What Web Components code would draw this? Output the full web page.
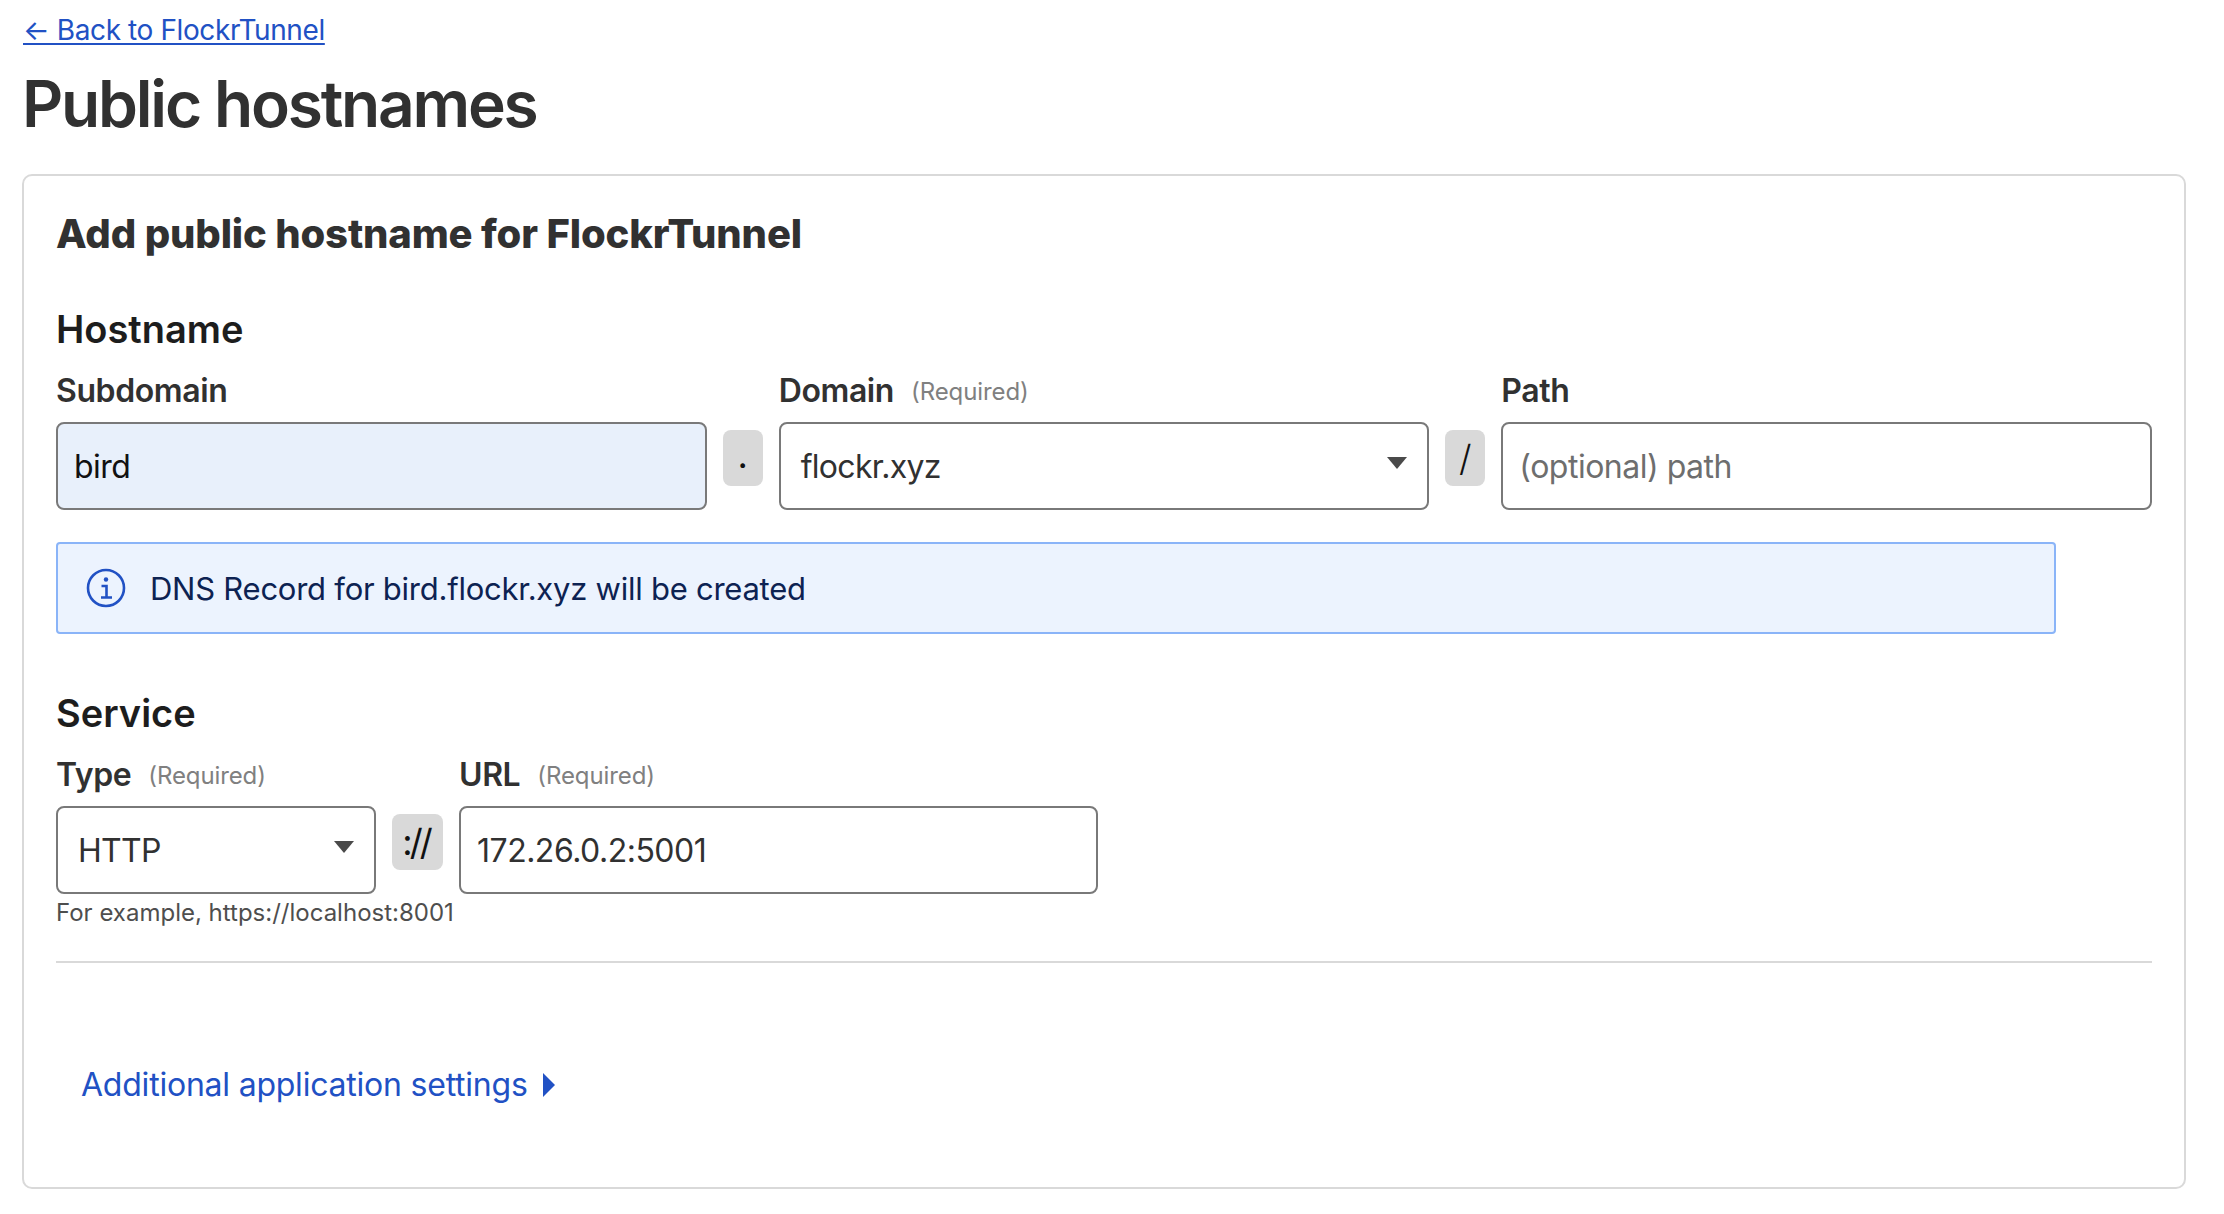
<!DOCTYPE html>
<html>
<head>
<meta charset="utf-8">
<title>Public hostnames</title>
<style>
  html, body { margin: 0; background: #fff; }
  body { font-family: Inter, "Liberation Sans", sans-serif; color: #313131; }
</style>
</head>
<body>
<fl-page>
  <a slot="back" href="#">← Back to FlockrTunnel</a>
  <span slot="title">Public hostnames</span>
  <fl-card heading="Add public hostname for FlockrTunnel">
    <fl-section heading="Hostname" style="--top: 47px">
      <fl-row class="hostname">
        <fl-field label="Subdomain" grow><fl-input value="bird" autofilled></fl-input></fl-field>
        <fl-chip class="dot">.</fl-chip>
        <fl-field label="Domain" required grow><fl-select value="flockr.xyz"></fl-select></fl-field>
        <fl-chip>/</fl-chip>
        <fl-field label="Path" grow><fl-input placeholder="(optional) path"></fl-input></fl-field>
      </fl-row>
    </fl-section>
    <fl-notice>DNS Record for bird.flockr.xyz will be created</fl-notice>
    <fl-section heading="Service" style="--top: 55px">
      <fl-row>
        <fl-field label="Type" required width="320px"><fl-select value="HTTP"></fl-select></fl-field>
        <fl-chip wide>://</fl-chip>
        <fl-field label="URL" required width="639px"><fl-input value="172.26.0.2:5001"></fl-input></fl-field>
      </fl-row>
    </fl-section>
    <fl-help>For example, https://localhost:8001</fl-help>
    <fl-disclosure>Additional application settings</fl-disclosure>
  </fl-card>
</fl-page>

<script>
class FlPage extends HTMLElement {
  constructor() {
    super();
    this.attachShadow({ mode: 'open' });
    this.shadowRoot.innerHTML = `
      <style>
        :host { display: block; padding: 10px 38px 25px 22px; }
        .back { height: 40px; font-size: 28px; line-height: 40px; letter-spacing: -0.4px; padding-left: 1px; }
        ::slotted(a) { color: #2151c4; text-decoration: underline; text-underline-offset: 3px; }
        h1 { margin: 14px 0 0; height: 110px; font-size: 64px; line-height: 80px; font-weight: 600; color: #313131; letter-spacing: -2.2px; }
      </style>
      <div class="back"><slot name="back"></slot></div>
      <h1><slot name="title"></slot></h1>
      <slot></slot>`;
  }
}

class FlCard extends HTMLElement {
  constructor() {
    super();
    this.attachShadow({ mode: 'open' });
    this.shadowRoot.innerHTML = `
      <style>
        :host { display: block; box-sizing: border-box; height: 1015px; padding: 34px 32px 0; border: 2px solid #d9d9d9; border-radius: 10px; }
        h2 { margin: 0; font-size: 40px; line-height: 48px; font-weight: 800; color: #313131; letter-spacing: -0.15px; }
      </style>
      <h2></h2>
      <slot></slot>`;
  }
  connectedCallback() {
    this.shadowRoot.querySelector('h2').textContent = this.getAttribute('heading');
  }
}

class FlSection extends HTMLElement {
  constructor() {
    super();
    this.attachShadow({ mode: 'open' });
    this.shadowRoot.innerHTML = `
      <style>
        :host { display: block; padding-top: var(--top, 0); }
        h3 { margin: 0 0 14px; font-size: 38px; line-height: 48px; font-weight: 600; color: #1d1d1d; letter-spacing: 0; }
      </style>
      <h3></h3>
      <slot></slot>`;
  }
  connectedCallback() {
    this.shadowRoot.querySelector('h3').textContent = this.getAttribute('heading');
  }
}

class FlRow extends HTMLElement {
  constructor() {
    super();
    this.attachShadow({ mode: 'open' });
    this.shadowRoot.innerHTML = `
      <style>:host { display: flex; align-items: flex-end; gap: 16px; }</style>
      <slot></slot>`;
  }
}

class FlField extends HTMLElement {
  constructor() {
    super();
    this.attachShadow({ mode: 'open' });
    this.shadowRoot.innerHTML = `
      <style>
        :host { display: block; min-width: 0; }
        :host([grow]) { flex: 1 1 0; }
        .label { display: flex; align-items: center; gap: 17px; height: 48px; margin-bottom: 7px; }
        .name { font-size: 32px; line-height: 44px; font-weight: 600; color: #313131; letter-spacing: -0.4px; }
        .req { font-size: 24px; color: #808080; letter-spacing: -0.1px; }
      </style>
      <div class="label"><span class="name"></span><span class="req">(Required)</span></div>
      <slot></slot>`;
  }
  connectedCallback() {
    this.shadowRoot.querySelector('.name').textContent = this.getAttribute('label');
    if (!this.hasAttribute('required')) this.shadowRoot.querySelector('.req').remove();
    if (this.hasAttribute('width')) this.style.width = this.getAttribute('width');
  }
}

class FlInput extends HTMLElement {
  constructor() {
    super();
    this.attachShadow({ mode: 'open' });
    this.shadowRoot.innerHTML = `
      <style>
        :host { display: block; box-sizing: border-box; height: 88px; padding: 0 16px; border: 2px solid #797979; border-radius: 8px; background: #fff; font-size: 32px; line-height: 86px; letter-spacing: -0.5px; color: #313131; white-space: nowrap; overflow: hidden; }
        :host([autofilled]) { background: #e8f0fb; color: #111; }
        .ph { color: #6e6e6e; }
      </style>
      <span></span>`;
  }
  connectedCallback() {
    const span = this.shadowRoot.querySelector('span');
    span.textContent = this.getAttribute('value') || this.getAttribute('placeholder') || '';
    if (!this.hasAttribute('value')) span.className = 'ph';
  }
}

class FlSelect extends HTMLElement {
  constructor() {
    super();
    this.attachShadow({ mode: 'open' });
    this.shadowRoot.innerHTML = `
      <style>
        :host { display: flex; align-items: center; justify-content: space-between; box-sizing: border-box; height: 88px; padding: 0 20px 0 20px; border: 2px solid #797979; border-radius: 8px; background: #fff; font-size: 32px; letter-spacing: -0.7px; color: #313131; }
        svg { display: block; margin-top: -6px; }
      </style>
      <span></span>
      <svg width="20" height="12" viewBox="0 0 20 12"><path d="M0 0H20L10 12Z" fill="#4a4a4a"/></svg>`;
  }
  connectedCallback() {
    this.shadowRoot.querySelector('span').textContent = this.getAttribute('value');
  }
}

class FlChip extends HTMLElement {
  constructor() {
    super();
    this.attachShadow({ mode: 'open' });
    this.shadowRoot.innerHTML = `
      <style>
        :host { display: flex; align-items: center; justify-content: center; flex: none; box-sizing: border-box; width: 40px; height: 56px; margin-bottom: 24px; border-radius: 8px; background: #d9d9d9; font-size: 36px; font-weight: 300; line-height: 56px; color: #111; }
        :host(.dot) { padding-bottom: 6px; font-weight: 400; }
        :host([wide]) { width: 51px; font-size: 36px; font-weight: 400; letter-spacing: -3px; padding-right: 3px; }
      </style>
      <slot></slot>`;
  }
}

class FlNotice extends HTMLElement {
  constructor() {
    super();
    this.attachShadow({ mode: 'open' });
    this.shadowRoot.innerHTML = `
      <style>
        :host { display: flex; align-items: center; gap: 24px; box-sizing: border-box; width: 2000px; height: 92px; margin-top: 32px; padding: 0 26px 0 28px; border: 2px solid #8ab4f8; border-radius: 4px; background: #ecf3fe; font-size: 31px; letter-spacing: -0.25px; color: #0d2252; }
        svg { flex: none; display: block; }
      </style>
      <svg width="40" height="40" viewBox="0 0 40 40" fill="none" stroke="#2151c4">
        <circle cx="20" cy="20" r="18" stroke-width="2.6"/>
        <path d="M15.5 18H20.5V29M15 29.5H26" stroke-width="2.6"/>
        <circle cx="20" cy="11.5" r="2.2" fill="#2151c4" stroke="none"/>
      </svg>
      <span><slot></slot></span>`;
  }
}

class FlHelp extends HTMLElement {
  constructor() {
    super();
    this.attachShadow({ mode: 'open' });
    this.shadowRoot.innerHTML = `
      <style>
        :host { display: block; box-sizing: border-box; height: 66px; margin-top: 3px; padding-bottom: 34px; border-bottom: 2px solid #d9d9d9; font-size: 24px; line-height: 32px; color: #4e4e4e; }
      </style>
      <slot></slot>`;
  }
}

class FlDisclosure extends HTMLElement {
  constructor() {
    super();
    this.attachShadow({ mode: 'open' });
    this.shadowRoot.innerHTML = `
      <style>
        :host { display: flex; align-items: center; gap: 15px; margin: 98px 0 0 25px; font-size: 32px; line-height: 48px; letter-spacing: -0.22px; color: #2151c4; }
        svg { display: block; }
      </style>
      <span><slot></slot></span>
      <svg width="12" height="24" viewBox="0 0 12 24"><path d="M0 0L12 12L0 24Z" fill="#2151c4"/></svg>`;
  }
}

customElements.define('fl-page', FlPage);
customElements.define('fl-card', FlCard);
customElements.define('fl-section', FlSection);
customElements.define('fl-row', FlRow);
customElements.define('fl-field', FlField);
customElements.define('fl-input', FlInput);
customElements.define('fl-select', FlSelect);
customElements.define('fl-chip', FlChip);
customElements.define('fl-notice', FlNotice);
customElements.define('fl-help', FlHelp);
customElements.define('fl-disclosure', FlDisclosure);
</script>
</body>
</html>
